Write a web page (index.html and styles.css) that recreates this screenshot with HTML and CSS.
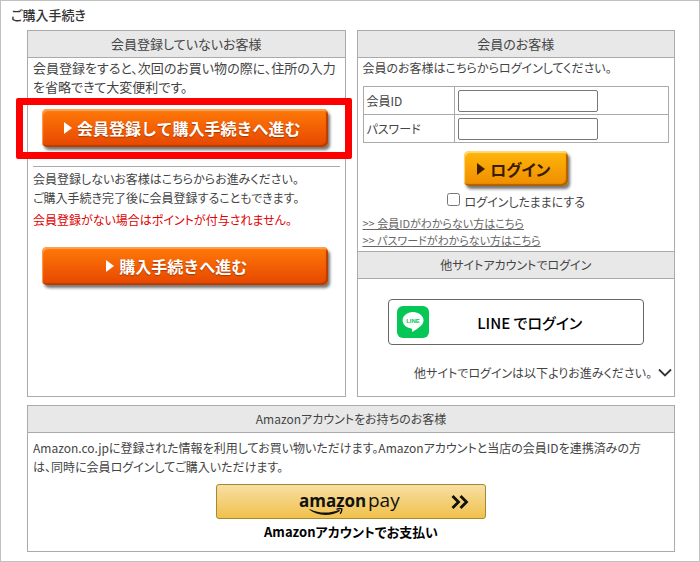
FILE: index.html
```html
<!DOCTYPE html>
<html lang="ja">
<head>
    <meta charset="UTF-8">
    <meta name="viewport" content="width=device-width, initial-scale=1.0">
    <title>ご購入手続き</title>
    <link rel="stylesheet" href="styles.css">
</head>
<body>

<main class="page">
    <h1 class="page-title">ご購入手続き</h1>

    <div class="columns">
        <section class="box guest">
            <h2 class="box-title">会員登録していないお客様</h2>
            <div class="box-body">
                <p class="lead">会員登録をすると、次回のお買い物の際に、住所の入力を省略できて大変便利です。</p>
                <div class="action marked">
                    <button type="button" class="btn btn-orange"><span class="arrow"></span>会員登録して購入手続きへ進む</button>
                </div>
                <hr>
                <p>会員登録しないお客様はこちらからお進みください。<br>ご購入手続き完了後に会員登録することもできます。</p>
                <p class="warning">会員登録がない場合はポイントが付与されません。</p>
                <div class="action">
                    <button type="button" class="btn btn-orange"><span class="arrow"></span>購入手続きへ進む</button>
                </div>
            </div>
        </section>

        <section class="box member">
            <h2 class="box-title">会員のお客様</h2>
            <form class="box-body">
                <p>会員のお客様はこちらからログインしてください。</p>
                <table class="login-table">
                    <tr>
                        <th><label for="memberId">会員ID</label></th>
                        <td><input type="text" id="memberId"></td>
                    </tr>
                    <tr>
                        <th><label for="password">パスワード</label></th>
                        <td><input type="password" id="password"></td>
                    </tr>
                </table>
                <button type="button" class="btn btn-login"><span class="arrow"></span>ログイン</button>
                <div class="keep">
                    <input type="checkbox" id="keep">
                    <label for="keep">ログインしたままにする</label>
                </div>
                <ul class="help-links">
                    <li><a href="#">&gt;&gt; 会員IDがわからない方はこちら</a></li>
                    <li><a href="#">&gt;&gt; パスワードがわからない方はこちら</a></li>
                </ul>
            </form>
            <h2 class="box-title box-title-sub">他サイトアカウントでログイン</h2>
            <div class="social">
                <button type="button" class="btn-line">
                    <svg width="32" height="32" viewBox="0 0 32 32" aria-hidden="true">
                        <rect width="32" height="32" rx="6" fill="#06c755"/>
                        <path d="M16 6C10.300 6 5.600 9.700 5.600 14.300c0 4.100 3.700 7.500 8.600 8.200 1.200.2 1 .9.800 2.300-.1.800.3 1.100 1.200.6 1.900-1 6.800-4 8.900-6.800 1-1.400 1.400-2.800 1.400-4.300C26.500 9.700 21.700 6 16 6z" fill="#fff"/>
                        <text x="16" y="16.500" text-anchor="middle" class="line-mark">LINE</text>
                    </svg>
                    <span>LINE でログイン</span>
                </button>
                <button type="button" class="more">
                    他サイトでログインは以下よりお進みください。
                    <svg width="14" height="10" viewBox="0 0 14 10" aria-hidden="true">
                        <path d="M1 1.500l6 6 6-6" fill="none" stroke="#333" stroke-width="1.800"/>
                    </svg>
                </button>
            </div>
        </section>
    </div>

    <section class="box amazon">
        <h2 class="box-title">Amazonアカウントをお持ちのお客様</h2>
        <div class="box-body">
            <p class="amazon-text">Amazon.co.jpに登録された情報を利用してお買い物いただけます。Amazonアカウントと当店の会員IDを連携済みの方は、同時に会員ログインしてご購入いただけます。</p>
            <button type="button" class="btn-amazon">
                <svg class="amazon-logo" width="104" height="32" viewBox="0 0 104 32" role="img" aria-label="amazon pay">
                    <text x="0" y="21" class="logo-amazon">amazon</text>
                    <text x="69" y="21" class="logo-pay">pay</text>
                    <path d="M10 23.600c8 6.600 22 7 31 1.400l-.7-1.200c-9 3.800-20 3.900-29.300-.6z" fill="#111"/>
                    <path d="M37.500 23.300c2-.9 4-1 5.300-.5.200 1.600-.5 3.500-1.700 4.900" fill="none" stroke="#111" stroke-width="1.400"/>
                </svg>
                <svg class="amazon-next" width="18" height="14" viewBox="0 0 18 14" aria-hidden="true">
                    <path d="M1.500 1l6 6-6 6M9.500 1l6 6-6 6" fill="none" stroke="#111" stroke-width="2.800"/>
                </svg>
            </button>
            <p class="amazon-note">Amazonアカウントでお支払い</p>
        </div>
    </section>
</main>

</body>
</html>
```
FILE: styles.css
```css
* {
    box-sizing: border-box;
}
body {
    margin: 0;
    font-family: "Noto Sans CJK JP", sans-serif;
    font-size: 12px;
    line-height: 19px;
    font-feature-settings: "palt";
    color: #444;
    background-color: #fff;
}
button,
input {
    font-family: inherit;
    font-feature-settings: inherit;
}
button {
    cursor: pointer;
}
p {
    margin: 0;
}
.page {
    min-height: 100vh;
    padding: 4px 24px 8px 26px;
    border: 1px solid #c0c0c0;
}
.page-title {
    margin: 0 0 5px -16px;
    color: #333;
    font-size: 13px;
    font-weight: 500;
    line-height: 20px;
}

/* Boxes */
.columns {
    display: grid;
    grid-template-columns: 1fr 1fr;
    gap: 11px;
    margin-bottom: 8px;
}
.box {
    border: 1px solid #aaa;
}
.box-title {
    margin: 0;
    padding: 3px 0;
    border-bottom: 1px solid #aaa;
    background-color: #e8e8e8;
    font-size: 12px;
    font-weight: normal;
    line-height: 20px;
    text-align: center;
}
.columns .box-title,
.lead {
    font-size: 13px;
}
.columns .box-title-sub {
    border-top: 1px solid #aaa;
    font-size: 12px;
}
.box-body {
    padding: 0 5px 2px;
}

/* Buttons */
.btn {
    display: flex;
    align-items: center;
    justify-content: center;
    border: none;
    border-radius: 5px;
    font-size: 16px;
    font-weight: bold;
}
.arrow {
    border-left: 8px solid currentColor;
    border-top: 6px solid transparent;
    border-bottom: 6px solid transparent;
}
.btn-orange {
    width: 100%;
    height: 38px;
    padding: 0 16px 0 0;
    gap: 5px;
    color: #fff;
    font-feature-settings: normal;
    text-shadow: 0 1px 1px #a63a00;
    background: linear-gradient(#ff7a08, #e64600);
    box-shadow: inset 1px 2px 1px #ffa050, inset -2px -2px 1px #bc3c00, 2px 3px 3px #777;
}
.action {
    padding: 0 12px 0 9px;
}
.marked {
    position: relative;
    margin: 13px 0 19px;
}
.marked .btn-orange {
    padding-right: 5px;
}
/* red frame that runs past the box edges */
.marked::after {
    content: "";
    position: absolute;
    inset: -11px -12px -12px -17px;
    border: 7px solid #f00;
    border-radius: 2px;
    pointer-events: none;
}
hr {
    margin: 0 0 2px;
    border: none;
    border-top: 1px solid #aaa;
}
.warning {
    margin: 3px 0 18px;
    color: #e00000;
}

/* Member login */
.login-table {
    width: 100%;
    margin-top: 9px;
    border-collapse: collapse;
}
.login-table th,
.login-table td {
    height: 28px;
    padding: 0 3px;
    border: 1px solid #aaa;
    font-weight: normal;
    text-align: left;
}
.login-table th {
    width: 30%;
}
.login-table input {
    display: block;
    width: 140px;
    height: 22px;
    border: 1px solid #777;
    border-radius: 2px;
}
.btn-login {
    width: 104px;
    height: 35px;
    margin: 8px auto 6px;
    padding: 0 4px 0 0;
    gap: 5px;
    color: #3a1c00;
    background: linear-gradient(#ffb60a, #ee8c00);
    box-shadow: inset 1px 2px 1px #ffd878, inset -2px -2px 1px #b06000, 2px 3px 3px #777;
}
.keep {
    display: flex;
    justify-content: center;
    gap: 5px;
    margin-bottom: 4px;
}
.keep input {
    width: 13px;
    height: 13px;
    margin: 1px 0;
}
.help-links {
    margin: 0;
    padding: 0;
    list-style: none;
    font-size: 11px;
    line-height: 17px;
}
.help-links a {
    color: #666;
}
.social {
    padding: 20px 2px 14px;
}
.btn-line {
    display: flex;
    align-items: center;
    width: 256px;
    max-width: 100%;
    height: 46px;
    margin: 0 auto 18px;
    padding: 0 8px;
    border: 1px solid #666;
    border-radius: 4px;
    background-color: #fff;
    color: #000;
    font-size: 15px;
    font-weight: 500;
}
.btn-line span {
    flex: 1;
    padding-right: 4px;
    text-align: center;
}
.line-mark {
    font-family: "Liberation Sans", sans-serif;
    font-size: 6px;
    font-weight: bold;
    fill: #06c755;
}
.more {
    display: flex;
    align-items: center;
    gap: 6px;
    margin-left: auto;
    padding: 0;
    border: none;
    background: none;
    color: #444;
    font-size: 12px;
    line-height: 19px;
}

/* Amazon */
.amazon .box-body {
    padding: 5px 5px 10px;
}
.amazon-text {
    padding-right: 20px;
}
.btn-amazon {
    display: grid;
    grid-template-columns: 1fr auto 1fr;
    align-items: center;
    width: 270px;
    height: 35px;
    margin: 8px auto 3px;
    padding: 0 16px;
    border: 1px solid #a88734;
    border-radius: 3px;
    background: linear-gradient(#f7dfa5, #f0c14b);
}
.amazon-logo {
    grid-column: 2;
}
.amazon-next {
    justify-self: end;
}
.logo-amazon,
.logo-pay {
    font-family: "Open Sans", sans-serif;
    fill: #111;
}
.logo-amazon {
    font-size: 17px;
    font-weight: bold;
}
.logo-pay {
    font-size: 19px;
}
.amazon-note {
    color: #000;
    font-size: 13px;
    font-weight: bold;
    text-align: center;
}
```
